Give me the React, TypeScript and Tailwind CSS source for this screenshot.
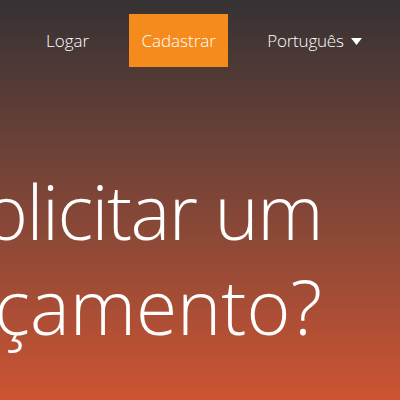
export default function App() {
  return (
    <div className="relative h-[400px] w-[400px] overflow-hidden bg-linear-to-b from-[#353233] to-[#cd5331] font-['Open_Sans','Noto_Sans',sans-serif] text-white">
      {/* top nav */}
      <nav className="flex items-center pl-[32px] pt-[14px] text-[17px] font-light">
        <a className="mr-[26px] flex h-[53px] items-center px-[14px]">Logar</a>
        <a className="mr-[25px] flex h-[53px] w-[99px] items-center justify-center bg-[#f48b1c]">Cadastrar</a>
        <a className="flex h-[53px] items-center gap-[7px] px-[14px] tracking-[-0.2px]">
          Português
          <svg width="11" height="7" viewBox="0 0 11 7" className="mt-[1px]">
            <path d="M0 0h11L5.5 7z" fill="white" />
          </svg>
        </a>
      </nav>

      {/* heading, right-aligned and spilling off the left edge */}
      <h1 className="mt-[97px] flex w-[322px] flex-col items-end text-[75px] font-light leading-[95px] whitespace-nowrap">
        <span className="tracking-[-1.5px]">Solicitar um</span>
        <span className="tracking-[0px]">orçamento?</span>
      </h1>
    </div>
  );
}
